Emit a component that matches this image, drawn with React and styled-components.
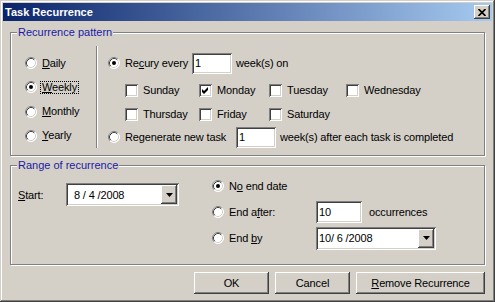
import styled, { createGlobalStyle } from "styled-components";

const Global = createGlobalStyle`
  body {
    margin: 0;
    font-family: "Liberation Sans", Arial, sans-serif;
    font-size: 11px;
    letter-spacing: -0.15px;
    color: #000;
    background: #d4d0c8;
  }
`;

function Radio({ checked }) {
  return (
    <RadioBox width="12" height="12" viewBox="0 0 12 12">
      <circle cx="6" cy="6" r="5.5" fill="#fff" />
      <path d="M2.11 9.89 A5.5 5.5 0 0 1 9.89 2.11" fill="none" stroke="#808080" />
      <path d="M9.89 2.11 A5.5 5.5 0 0 1 2.11 9.89" fill="none" stroke="#fff" />
      <path d="M2.82 9.18 A4.5 4.5 0 0 1 9.18 2.82" fill="none" stroke="#404040" />
      <path d="M9.18 2.82 A4.5 4.5 0 0 1 2.82 9.18" fill="none" stroke="#d4d0c8" />
      {checked && <circle cx="6" cy="6" r="2" fill="#000" />}
    </RadioBox>
  );
}

function Option({ checked, focus, width, children }) {
  return (
    <OptionItem $w={width}>
      <Radio checked={checked} />
      <Caption $focus={focus}>{children}</Caption>
    </OptionItem>
  );
}

function Check({ checked, children }) {
  return (
    <CheckItem>
      <CheckBox>
        {checked && (
          <svg width="13" height="13" viewBox="0 0 13 13">
            <path d="M3 5 L5 7 L9 3 L9 6 L5 10 L3 8 Z" fill="#000" />
          </svg>
        )}
      </CheckBox>
      <span>{children}</span>
    </CheckItem>
  );
}

function DatePicker({ value, width, indent }) {
  return (
    <Combo $w={width}>
      <ComboText $indent={indent}>{value}</ComboText>
      <DropButton>
        <svg width="7" height="4" viewBox="0 0 7 4">
          <path d="M0 0 H7 L3.5 4 Z" fill="#000" />
        </svg>
      </DropButton>
    </Combo>
  );
}

export default function App() {
  return (
    <>
      <Global />
      <Window>
        <TitleBar>
          <TitleText>Task Recurrence</TitleText>
          <CloseButton>
            <svg width="8" height="7" viewBox="0 0 8 7">
              <path d="M0.5 0 L7.5 7 M7.5 0 L0.5 7" stroke="#000" strokeWidth="1.7" />
            </svg>
          </CloseButton>
        </TitleBar>
        <Body>
          <Group $h={124}>
            <Legend>Recurrence pattern</Legend>
            <PatternBody>
              <FreqColumn>
                <FreqRow><Option><u>D</u>aily</Option></FreqRow>
                <FreqRow><Option checked focus><u>W</u>eekly</Option></FreqRow>
                <FreqRow><Option><u>M</u>onthly</Option></FreqRow>
                <FreqRow><Option><u>Y</u>early</Option></FreqRow>
              </FreqColumn>
              <WeeklyColumn>
                <Line $h={22} $mt={6}>
                  <Option checked width={84}>Re<u>c</u>ury every</Option>
                  <Field $w={40} defaultValue="1" />
                  <Note>week(s) on</Note>
                </Line>
                <Line $h={18} $mt={7}>
                  <DayGrid>
                    <Check>Sunday</Check>
                    <Check checked>Monday</Check>
                    <Check>Tuesday</Check>
                    <Check>Wednesday</Check>
                  </DayGrid>
                </Line>
                <Line $h={18} $mt={6}>
                  <DayGrid>
                    <Check>Thursday</Check>
                    <Check>Friday</Check>
                    <Check>Saturday</Check>
                  </DayGrid>
                </Line>
                <Line $h={22} $mt={3}>
                  <Option width={128}>Regenerate new task</Option>
                  <Field $w={40} defaultValue="1" />
                  <Note>week(s) after each task is completed</Note>
                </Line>
              </WeeklyColumn>
            </PatternBody>
          </Group>

          <Group $h={100} $mt={9}>
            <Legend>Range of recurrence</Legend>
            <RangeBody>
              <StartBlock>
                <StartLabel><u>S</u>tart:</StartLabel>
                <DatePicker value="8 / 4 /2008" width={113} indent={8} />
              </StartBlock>
              <EndList>
                <EndRow>
                  <Option checked>N<u>o</u> end date</Option>
                </EndRow>
                <EndRow>
                  <Option width={104}>End a<u>f</u>ter:</Option>
                  <Field $w={46} $h={22} defaultValue="10" />
                  <Note $ml={7}>occurrences</Note>
                </EndRow>
                <EndRow>
                  <Option width={104}>End <u>b</u>y</Option>
                  <DatePicker value="10/ 6 /2008" width={120} indent={3} />
                </EndRow>
              </EndList>
            </RangeBody>
          </Group>

          <ButtonRow>
            <Button $w={75}>OK</Button>
            <Button $w={75}>Cancel</Button>
            <Button $w={129}><u>R</u>emove Recurrence</Button>
          </ButtonRow>
        </Body>
      </Window>
    </>
  );
}

const sunken = `
  background: #fff;
  box-shadow: inset 1px 1px #808080, inset -1px -1px #fff,
    inset 2px 2px #404040, inset -2px -2px #d4d0c8;
`;

const raised = `
  background: #d4d0c8;
  box-shadow: inset -1px -1px #404040, inset 1px 1px #fff,
    inset -2px -2px #808080, inset 2px 2px #d4d0c8;
`;

const Window = styled.div`
  width: 495px;
  height: 302px;
  box-sizing: border-box;
  padding: 3px;
  display: flex;
  flex-direction: column;
  background: #d4d0c8;
  box-shadow: inset -1px -1px #404040, inset 1px 1px #d4d0c8,
    inset -2px -2px #808080, inset 2px 2px #fff;
`;
const TitleBar = styled.div`
  height: 18px;
  display: flex;
  align-items: center;
  justify-content: space-between;
  padding: 0 2px;
  background: linear-gradient(to right, #0a246a, #a6caf0);
`;
const TitleText = styled.span`
  color: #fff;
  font-weight: bold;
  font-size: 11px;
  letter-spacing: 0;
`;
const CloseButton = styled.div`
  width: 16px;
  height: 14px;
  display: flex;
  align-items: center;
  justify-content: center;
  ${raised}
`;
const Body = styled.div`
  flex: 1;
  padding: 11px 7px 0 7px;
`;
const Group = styled.div`
  position: relative;
  height: ${(p) => p.$h}px;
  margin-top: ${(p) => p.$mt || 0}px;
  box-sizing: border-box;
  border: 1px solid #808080;
  box-shadow: inset 1px 1px #fff, 1px 1px #fff;
`;
const Legend = styled.span`
  position: absolute;
  left: 6px;
  top: -7px;
  padding: 0 1px;
  line-height: 13px;
  background: #d4d0c8;
  color: #1a1aa6;
  letter-spacing: 0;
`;
const PatternBody = styled.div`
  display: flex;
  padding: 13px 0 0 14px;
`;
const FreqColumn = styled.div`
  width: 71px;
  height: 102px;
  box-sizing: border-box;
  padding-top: 5px;
  display: flex;
  flex-direction: column;
`;
const FreqRow = styled.div`
  height: 24.67px;
  display: flex;
  align-items: center;
`;
const WeeklyColumn = styled.div`
  height: 102px;
  box-sizing: border-box;
  padding-left: 11px;
  border-left: 1px solid #808080;
  box-shadow: inset 1px 0 #fff;
  display: flex;
  flex-direction: column;
`;
const Line = styled.div`
  height: ${(p) => p.$h}px;
  margin-top: ${(p) => p.$mt}px;
  display: flex;
  align-items: center;
`;
const DayGrid = styled.div`
  display: grid;
  grid-template-columns: 74px 70px 77px auto;
  margin-left: 17px;
`;
const OptionItem = styled.div`
  display: flex;
  align-items: center;
  gap: 4px;
  width: ${(p) => (p.$w ? `${p.$w}px` : "auto")};
  flex-shrink: 0;
`;
const RadioBox = styled.svg`
  display: block;
  flex-shrink: 0;
`;
const Caption = styled.span`
  padding: 0 1px;
  line-height: 11px;
  border: 1px dotted ${(p) => (p.$focus ? "#000" : "transparent")};
  margin-left: -1px;
`;
const CheckItem = styled.div`
  display: flex;
  align-items: center;
  gap: 5px;
`;
const CheckBox = styled.span`
  width: 13px;
  height: 13px;
  display: block;
  ${sunken}
`;
const Field = styled.input`
  width: ${(p) => p.$w}px;
  height: ${(p) => p.$h || 21}px;
  box-sizing: border-box;
  border: none;
  outline: none;
  padding: 0 3px;
  font: inherit;
  color: #000;
  ${sunken}
`;
const Note = styled.span`
  margin-left: ${(p) => p.$ml || 4}px;
  white-space: nowrap;
`;
const RangeBody = styled.div`
  display: flex;
  padding: 7px 0 0 7px;
`;
const StartBlock = styled.div`
  width: 194px;
  margin-top: 10px;
  height: 23px;
  display: flex;
  align-items: center;
`;
const StartLabel = styled.span`
  width: 48px;
`;
const EndList = styled.div`
  display: flex;
  flex-direction: column;
`;
const EndRow = styled.div`
  height: 26px;
  display: flex;
  align-items: center;
`;
const Combo = styled.div`
  width: ${(p) => p.$w}px;
  height: 23px;
  box-sizing: border-box;
  padding: 2px;
  display: flex;
  align-items: stretch;
  ${sunken}
`;
const ComboText = styled.span`
  flex: 1;
  display: flex;
  align-items: center;
  padding-left: ${(p) => p.$indent - 2}px;
`;
const DropButton = styled.span`
  width: 16px;
  display: flex;
  align-items: center;
  justify-content: center;
  ${raised}
`;
const ButtonRow = styled.div`
  display: flex;
  justify-content: flex-end;
  gap: 6px;
  margin-top: 7px;
`;
const Button = styled.div`
  width: ${(p) => p.$w}px;
  height: 22px;
  display: flex;
  align-items: center;
  justify-content: center;
  ${raised}
`;
